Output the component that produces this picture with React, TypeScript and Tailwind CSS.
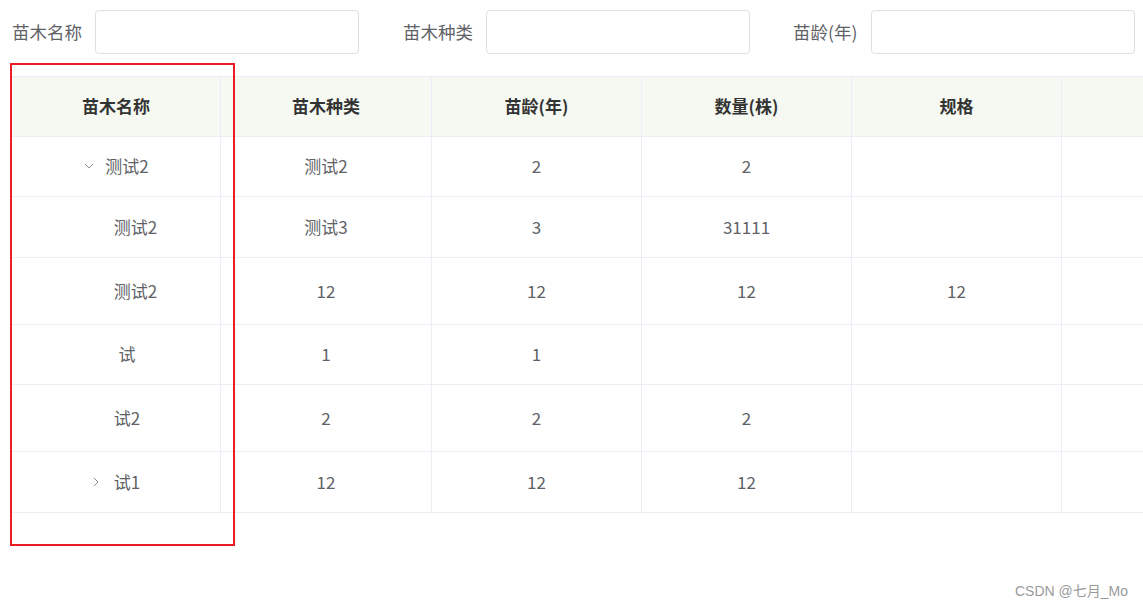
import React from "react";

const FONT = { fontFamily: '"Noto Sans CJK SC", "Noto Sans", sans-serif' };

type Row = {
  h: string;
  name: string;
  kind: "open" | "closed" | "child" | "plain";
  cells: string[];
};

const rows: Row[] = [
  { h: "h-[60px]", name: "测试2", kind: "open", cells: ["测试2", "2", "2", "", ""] },
  { h: "h-[61px]", name: "测试2", kind: "child", cells: ["测试3", "3", "31111", "", ""] },
  { h: "h-[67px]", name: "测试2", kind: "child", cells: ["12", "12", "12", "12", ""] },
  { h: "h-[60px]", name: "试", kind: "plain", cells: ["1", "1", "", "", ""] },
  { h: "h-[67px]", name: "试2", kind: "plain", cells: ["2", "2", "2", "", ""] },
  { h: "h-[61px]", name: "试1", kind: "closed", cells: ["12", "12", "12", "", ""] },
];

const widths = ["w-[209px]", "w-[211px]", "w-[210px]", "w-[210px]", "w-[210px]", "w-[210px]"];
const headers = ["苗木名称", "苗木种类", "苗龄(年)", "数量(株)", "规格", ""];

function DownIcon() {
  return (
    <svg width="10" height="6" viewBox="0 0 10 6" className="absolute right-full mr-[11px] top-1/2 -translate-y-1/2">
      <polyline points="1,1 5,5 9,1" fill="none" stroke="#8a8c91" strokeWidth="1" />
    </svg>
  );
}

function RightIcon() {
  return (
    <svg width="6" height="10" viewBox="0 0 6 10" className="absolute right-full mr-[15px] top-1/2 -translate-y-1/2">
      <polyline points="1,1 5,5 1,9" fill="none" stroke="#8a8c91" strokeWidth="1" />
    </svg>
  );
}

export default function App() {
  return (
    <div className="relative w-[1143px] h-[607px] bg-white overflow-hidden text-[17px]" style={FONT}>
      {/* search form */}
      <div className="flex items-center pt-[10px] pl-[12px] text-[#606266] text-[17.5px]">
        <span className="leading-none">苗木名称</span>
        <div className="ml-[13px] w-[264px] h-[44px] border border-[#dcdfe6] rounded-[4px] bg-white" />
        <span className="ml-[44px] leading-none">苗木种类</span>
        <div className="ml-[13px] w-[264px] h-[44px] border border-[#dcdfe6] rounded-[4px] bg-white" />
        <span className="ml-[43px] leading-none">苗龄(年)</span>
        <div className="ml-[14px] w-[264px] h-[44px] border border-[#dcdfe6] rounded-[4px] bg-white" />
      </div>

      {/* table */}
      <div className="mt-[22px] ml-[12px] w-[1131px] overflow-hidden">
        <div className="w-[1260px] border-t border-[#ebeef5]">
          <div className="flex h-[60px] bg-[#f5f9f2] border-b border-[#ebeef5]">
            {headers.map((t, i) => (
              <div
                key={i}
                className={`${widths[i]} shrink-0 h-full flex items-center justify-center pb-[2px] border-r border-[#ebeef5] font-bold text-[#333333]`}
              >
                {t}
              </div>
            ))}
          </div>
          {rows.map((r, ri) => (
            <div key={ri} className={`flex ${r.h} border-b border-[#ebeef5] text-[#606266]`}>
              <div className={`${widths[0]} shrink-0 h-full flex items-center justify-center pl-[22px] pb-[1px] border-r border-[#ebeef5]`}>
                <span className={`relative ${r.kind === "child" ? "ml-[17px]" : ""}`}>
                  {r.kind === "open" && <DownIcon />}
                  {r.kind === "closed" && <RightIcon />}
                  {r.name}
                </span>
              </div>
              {r.cells.map((c, ci) => (
                <div
                  key={ci}
                  className={`${widths[ci + 1]} shrink-0 h-full flex items-center justify-center pb-[1px] border-r border-[#ebeef5]`}
                >
                  {c}
                </div>
              ))}
            </div>
          ))}
        </div>
      </div>

      {/* highlight box */}
      <div className="absolute left-[10px] top-[63px] w-[225px] h-[483px] border-2 border-[#ec1c24] pointer-events-none" />

      {/* watermark */}
      <div
        className="absolute right-[15px] top-[581px] text-[14px] text-[#9a9a9a]"
        style={{ fontFamily: '"Liberation Sans", "Noto Sans CJK SC", sans-serif' }}
      >
        CSDN @七月_Mo
      </div>
    </div>
  );
}
